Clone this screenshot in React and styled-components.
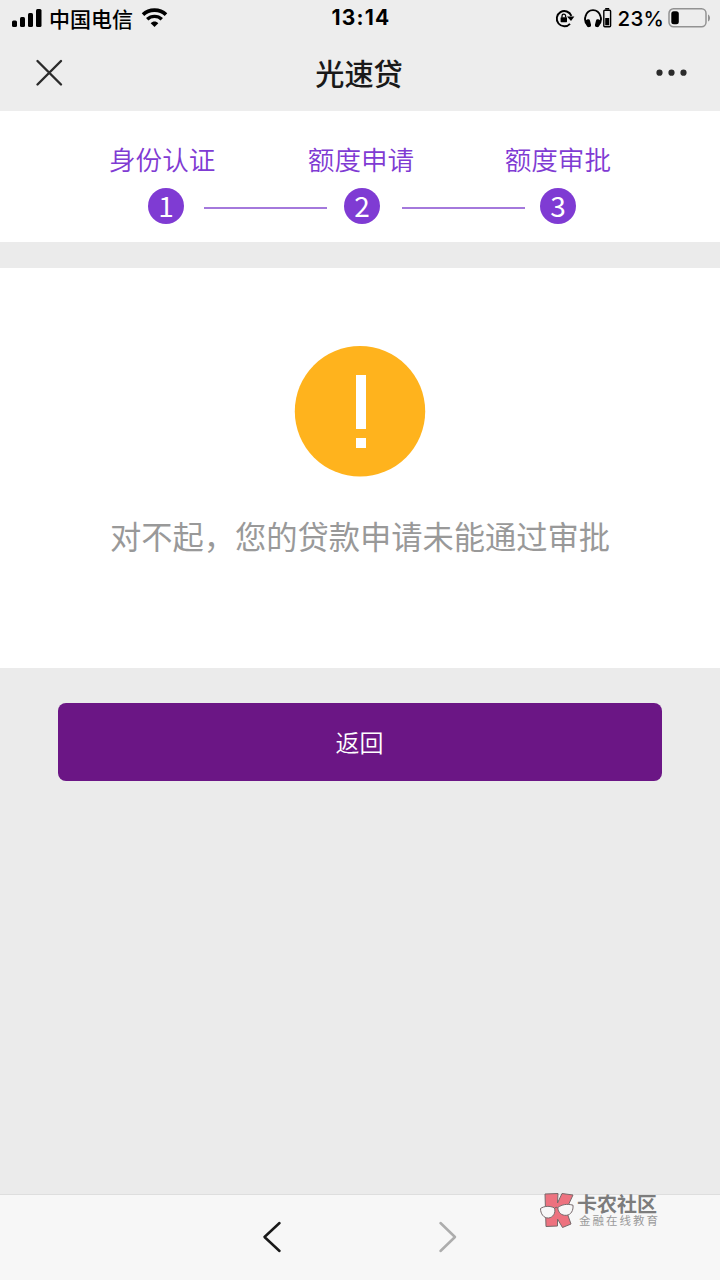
import React from 'react';
import styled, { createGlobalStyle } from 'styled-components';

const GlobalStyle = createGlobalStyle`
  * {
    box-sizing: border-box;
  }

  body {
    margin: 0;
    background: #ebebeb;
    font-family: 'Noto Sans CJK SC', sans-serif;
  }
`;

const Page = styled.div`
  position: relative;
  display: flex;
  flex-direction: column;
  width: 720px;
  height: 1280px;
  overflow: hidden;
  background: #ebebeb;
`;

const Header = styled.header`
  height: 111px;
  background: #ededed;
  color: #000;
`;

const StatusBar = styled.div`
  display: grid;
  grid-template-columns: 1fr auto 1fr;
  grid-template-rows: 36px;
  align-items: center;
  height: 36px;
  padding: 0 9px 0 12px;
`;

const StatusGroup = styled.div`
  display: flex;
  align-items: center;
  justify-content: ${props => (props.$end ? 'flex-end' : 'flex-start')};
  height: 35px;

  svg {
    flex: none;
    display: block;
  }
`;

const Carrier = styled.span`
  margin: 0 8px 0 7px;
  font-size: 21px;
  font-weight: 500;
  line-height: 34px;
`;

const Clock = styled.span`
  padding-right: 1px;
  font-family: Inter, sans-serif;
  font-size: 21px;
  font-weight: 700;
  line-height: 36px;
  letter-spacing: 1.2px;
`;

const Percent = styled.span`
  margin: 0 4px 0 6px;
  font-family: Inter, sans-serif;
  font-size: 20.5px;
  font-weight: 500;
  line-height: 35px;
  letter-spacing: 0.2px;
`;

const TitleBar = styled.div`
  display: grid;
  grid-template-columns: 1fr auto 1fr;
  align-items: center;
  height: 73px;
  padding: 0 33px 0 35px;

  svg {
    display: block;
  }
`;

const Title = styled.h1`
  margin: 0;
  padding-right: 4px;
  color: #191919;
  font-size: 29.2px;
  font-weight: 500;
  line-height: 73px;
`;

const More = styled.div`
  justify-self: end;
`;

const Steps = styled.section`
  height: 131px;
  padding-top: 28px;
  background: #fff;
  color: #7f3bd3;
`;

const StepLabels = styled.div`
  display: flex;
  justify-content: space-between;
  padding: 0 109px;
  font-size: 26.6px;
  font-weight: 350;
  line-height: 40px;
  white-space: nowrap;
`;

const StepLabel = styled.span`
  padding-left: ${props => props.$indent || 0}px;
`;

const StepMarks = styled.div`
  display: flex;
  align-items: center;
  margin-top: 9px;
  padding-left: 148px;
`;

const StepMark = styled.span`
  width: 36px;
  height: 36px;
  border-radius: 50%;
  background: #7f3bd3;
  color: #fff;
  font-size: 28px;
  font-weight: 400;
  line-height: 35px;
  text-align: center;
`;

const StepLine = styled.span`
  width: 123px;
  height: 2px;
  margin: 3px ${props => props.$right}px 0 ${props => props.$left}px;
  background: #a479dc;
`;

const Result = styled.section`
  display: flex;
  flex-direction: column;
  align-items: center;
  height: 400px;
  margin-top: 26px;
  padding-top: 78px;
  background: #fff;
`;

const Message = styled.p`
  margin: 35px 0 0;
  color: #999;
  font-size: 31.25px;
  font-weight: 400;
  line-height: 46px;
  white-space: nowrap;
`;

const BackButton = styled.button`
  height: 78px;
  margin: 35px 58px 0;
  padding: 0 1px 2px 0;
  border: 0;
  border-radius: 8px;
  background: #6b1685;
  color: #fff;
  font-family: inherit;
  font-size: 24px;
  font-weight: 350;
`;

const Footer = styled.footer`
  display: flex;
  justify-content: center;
  gap: 156px;
  height: 86px;
  margin-top: auto;
  padding-top: 26px;
  border-top: 1px solid #dedede;
  background: #f7f7f7;
`;

const Watermark = styled.div`
  position: absolute;
  top: 1191px;
  left: 539px;
  display: flex;
  gap: 2px;
`;

const WatermarkText = styled.div`
  padding-top: 3px;
  color: #7c7c7c;
  white-space: nowrap;

  strong {
    display: block;
    font-size: 20px;
    font-weight: 700;
    line-height: 20px;
  }

  span {
    display: block;
    padding-left: 2px;
    color: #9a9a9a;
    font-size: 11.5px;
    line-height: 13px;
    letter-spacing: 2px;
  }
`;

const LockSlot = styled.span`
  margin-right: 9px;
`;

function SignalIcon() {
  return (
    <svg width="30" height="20" viewBox="0 0 30 20">
      <rect x="0" y="12.5" width="5" height="6.5" rx="1.5" />
      <rect x="8" y="9" width="5" height="10" rx="1.5" />
      <rect x="16" y="5" width="5" height="14" rx="1.5" />
      <rect x="24" y="1" width="5.5" height="18" rx="1.5" />
    </svg>
  );
}

function WifiIcon() {
  return (
    <svg width="27" height="20" viewBox="0 0 27 20" fill="none" stroke="#000">
      <path d="M2 6.6C8.2 .6 18.8 .6 25 6.6" strokeWidth="3.6" />
      <path d="M6.2 11.3C10.3 7.4 16.7 7.4 20.8 11.3" strokeWidth="3.4" />
      <path d="M9.7 15.3C11.8 12.8 15.2 12.8 17.3 15.3L13.5 18.9Z" fill="#000" stroke="none" />
    </svg>
  );
}

function LockIcon() {
  return (
    <svg width="20" height="20" viewBox="0 0 20 20" fill="none" stroke="#000">
      <path d="M15 15.8A7.6 7.6 0 1 1 16.4 7.8" strokeWidth="1.9" />
      <path d="M12 8.6H19.4L16 13Z" fill="#000" stroke="none" />
      <rect x="5.6" y="9.3" width="6.4" height="4.9" rx="0.6" fill="#000" stroke="none" />
      <path d="M7 9.5V7.9a1.8 1.8 0 0 1 3.6 0V9.5" strokeWidth="1.3" />
    </svg>
  );
}

function HeadphoneIcon() {
  return (
    <svg width="28" height="20" viewBox="0 0 28 20">
      <path
        d="M3.6 17C.5 14 .8 10.500 1.500 8.300C2.600 4.500 5.200 2.100 9 2.100s6.400 2.400 7.500 6.200C17.200 10.500 17.500 14 14.400 17"
        fill="none"
        stroke="#000"
        strokeWidth="1.9"
      />
      <rect x="2.2" y="11.3" width="4.4" height="7.8" rx="1.8" transform="rotate(-14 4.4 15.2)" />
      <rect x="11.4" y="11.3" width="4.4" height="7.8" rx="1.8" transform="rotate(14 13.6 15.2)" />
      <rect x="19.8" y="2.3" width="6.8" height="16.4" rx="1" fill="none" stroke="#000" strokeWidth="1.4" />
      <rect x="21.2" y="0" width="4" height="1.6" />
      <rect x="21.2" y="10" width="4" height="7.3" />
    </svg>
  );
}

function BatteryIcon() {
  return (
    <svg width="43" height="20" viewBox="0 0 43 20">
      <rect x="1" y="0.8" width="37" height="18" rx="4.5" fill="none" stroke="#929292" strokeWidth="1.5" />
      <rect x="3.3" y="3.3" width="7.5" height="13" rx="2.5" />
      <path d="M40 6.5C42.7 7.5 42.7 12.5 40 13.5Z" fill="#929292" />
    </svg>
  );
}

function CloseIcon() {
  return (
    <svg width="28" height="28" viewBox="0 0 28 28" stroke="#2b2b2b" strokeWidth="2.4" strokeLinecap="round">
      <path d="M2.5 2L26 25.5M26 2L2.5 25.5" />
    </svg>
  );
}

function MoreIcon() {
  return (
    <svg width="31" height="8" viewBox="0 0 31 8" fill="#2b2b2b">
      <circle cx="3.5" cy="3.7" r="3.1" />
      <circle cx="15.5" cy="3.7" r="3.1" />
      <circle cx="27.5" cy="3.7" r="3.1" />
    </svg>
  );
}

function WarningIcon() {
  return (
    <svg width="132" height="132" viewBox="0 0 132 132">
      <circle cx="66" cy="65.3" r="65.2" fill="#ffb31d" />
      <rect x="62" y="29" width="10" height="54" fill="#fff" />
      <rect x="62" y="92" width="10" height="10" fill="#fff" />
    </svg>
  );
}

function ArrowIcon({ color, forward }) {
  return (
    <svg
      width="20"
      height="32"
      viewBox="0 0 20 32"
      fill="none"
      stroke={color}
      strokeWidth="2.5"
      strokeLinecap="round"
      strokeLinejoin="round"
    >
      <path d={forward ? 'M2.5 2L17 16L2.5 30' : 'M17.5 2L2.5 16L17.5 30'} />
    </svg>
  );
}

// 眼镜 K 标志
function LogoIcon() {
  return (
    <svg width="36" height="38" viewBox="0 0 36 38" stroke="#77696b" strokeWidth="1" strokeLinejoin="round">
      <path d="M6 3L19 2.5L18.500 12L23 2.5L34 4L27 19L32 33L23.500 36.500L18.500 28V35L7 35.500Z" fill="#ed727f" />
      <path d="M1.500 17.500C5 15 11 14.500 15.500 17C17 22 14 26.500 9.500 27C4.500 27.300 1.500 22.500 1.500 17.500Z" fill="#f7f7f7" />
      <path d="M18.800 16.500C23 13.500 28 12.500 34 14.200C34.500 19.500 32 23.800 27.500 24.300C22.500 24.800 19 21.500 18.800 16.500Z" fill="#f7f7f7" />
      <path d="M15.500 17.500Q17 15 18.800 17" fill="none" />
    </svg>
  );
}

export default function App() {
  return (
    <Page>
      <GlobalStyle />
      <Header>
        <StatusBar>
          <StatusGroup>
            <SignalIcon />
            <Carrier>中国电信</Carrier>
            <WifiIcon />
          </StatusGroup>
          <Clock>13:14</Clock>
          <StatusGroup $end>
            <LockSlot>
              <LockIcon />
            </LockSlot>
            <HeadphoneIcon />
            <Percent>23%</Percent>
            <BatteryIcon />
          </StatusGroup>
        </StatusBar>
        <TitleBar>
          <CloseIcon />
          <Title>光速贷</Title>
          <More>
            <MoreIcon />
          </More>
        </TitleBar>
      </Header>

      <Steps>
        <StepLabels>
          <StepLabel>身份认证</StepLabel>
          <StepLabel $indent={2}>额度申请</StepLabel>
          <StepLabel>额度审批</StepLabel>
        </StepLabels>
        <StepMarks>
          <StepMark>1</StepMark>
          <StepLine $left={20} $right={17} />
          <StepMark>2</StepMark>
          <StepLine $left={22} $right={15} />
          <StepMark>3</StepMark>
        </StepMarks>
      </Steps>

      <Result>
        <WarningIcon />
        <Message>对不起，您的贷款申请未能通过审批</Message>
      </Result>

      <BackButton type="button">返回</BackButton>

      <Footer>
        <ArrowIcon color="#191919" />
        <ArrowIcon color="#adadad" forward />
      </Footer>

      <Watermark>
        <LogoIcon />
        <WatermarkText>
          <strong>卡农社区</strong>
          <span>金融在线教育</span>
        </WatermarkText>
      </Watermark>
    </Page>
  );
}
